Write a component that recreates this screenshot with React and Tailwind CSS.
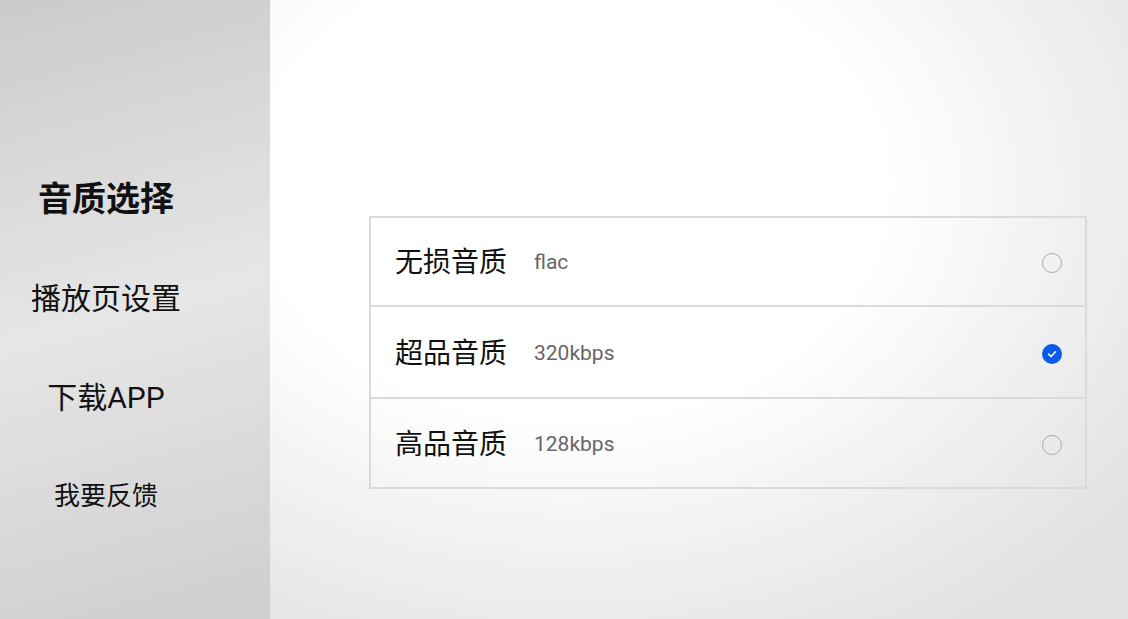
import React, { useState } from 'react';

const menu = [
  { id: 'quality', label: '音质选择', cls: 'text-[34px] font-bold' },
  { id: 'player', label: '播放页设置', cls: 'text-[30px]' },
  { id: 'app', label: '下载APP', cls: 'text-[30px]' },
  { id: 'feedback', label: '我要反馈', cls: 'text-[26px]' },
];

// row heights include the 2px divider (border-box)
const qualities = [
  { id: 'flac', label: '无损音质', sub: 'flac', h: 'h-[89px]' },
  { id: '320', label: '超品音质', sub: '320kbps', h: 'h-[92px]' },
  { id: '128', label: '高品音质', sub: '128kbps', h: 'h-[88px]' },
];

function Radio({ checked }) {
  if (checked) {
    return (
      <span className="w-5 h-5 rounded-full bg-[#0b5be8] flex items-center justify-center">
        <svg width="12" height="12" viewBox="0 0 12 12" fill="none">
          <path d="M2.5 6.2 L5 8.5 L9.5 3.8" stroke="#fff" strokeWidth="1.6" strokeLinecap="round" strokeLinejoin="round" />
        </svg>
      </span>
    );
  }
  return <span className="w-5 h-5 rounded-full border border-[#a9a9a9]" />;
}

export default function App() {
  const [selected, setSelected] = useState('320');

  return (
    <div className="w-[1128px] h-[619px] flex overflow-hidden font-['Roboto','Noto_Sans_CJK_SC',sans-serif]">
      {/* Sidebar */}
      <div className="w-[270px] h-full flex flex-col pt-[150px] pr-[58px] bg-[linear-gradient(165deg,#cbcbcb_0%,#e6e6e6_50%,#cecece_100%)]">
        {menu.map((item) => (
          <div key={item.id} className={`h-[99px] flex items-center justify-center text-[#111] ${item.cls}`}>
            {item.label}
          </div>
        ))}
      </div>

      {/* Main */}
      <div className="flex-1 h-full pl-[99px] pr-[41px] pt-[216px] bg-[radial-gradient(ellipse_700px_520px_at_35%_30%,#ffffff_0%,#ffffff_45%,#e3e1e2_100%)]">
        <div className="border-2 border-[#dadada]">
          {qualities.map((q, i) => (
            <div
              key={q.id}
              onClick={() => setSelected(q.id)}
              className={`${q.h} flex items-center pt-[3px] pl-[24px] pr-[23px] cursor-pointer ${i < qualities.length - 1 ? 'border-b-2 border-[#dadada]' : ''}`}
            >
              <span className="text-[28px] text-[#111]">{q.label}</span>
              <span className="ml-[27px] text-[21px] text-[#666]">{q.sub}</span>
              <span className="ml-auto flex">
                <Radio checked={selected === q.id} />
              </span>
            </div>
          ))}
        </div>
      </div>
    </div>
  );
}
